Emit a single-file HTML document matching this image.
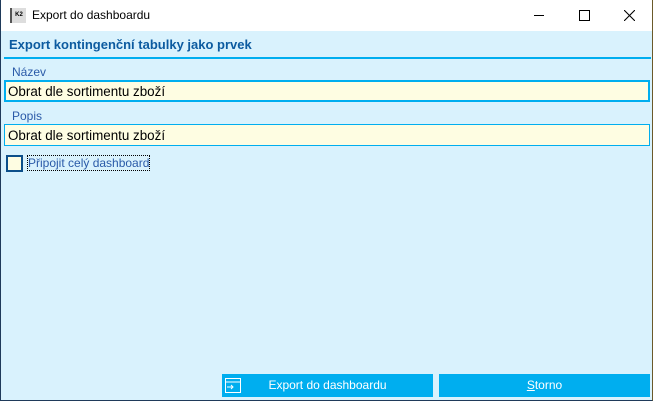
<!DOCTYPE html>
<html><head><meta charset="utf-8"><style>
body{margin:0;width:653px;height:401px;overflow:hidden;font-family:"Segoe UI","Liberation Sans",sans-serif;}
.win{position:absolute;left:0;top:0;background:#d9f2fd;border-right:1px solid #6b5a2a;border-bottom:1px solid #1f3a5a;border-left:1px solid #1f3a5a;box-sizing:border-box;width:653px;height:401px}
.tb{position:absolute;left:0;top:0;width:651px;height:31px;background:#fff}
.t{position:absolute;font-size:12px;white-space:nowrap}
.inp{position:absolute;left:3px;width:646px;height:22px;background:#fefde2;box-sizing:border-box}
.btn{position:absolute;top:374px;height:23px;background:#00aeef;color:#fff;font-size:12px;text-align:center;line-height:23px}
</style></head><body>
<div class="win">
<div class="tb">
<div style="position:absolute;left:9px;top:8px;width:16px;height:15px;background:#ddd;border-left:2px solid #555;font-size:6px;font-weight:bold;line-height:15px;text-align:center;box-sizing:border-box">K2</div>
<div class="t" style="left:31px;top:8px;color:#000">Export do dashboardu</div>
<div style="position:absolute;left:533px;top:15px;width:10px;height:1px;background:#000"></div>
<div style="position:absolute;left:578px;top:10px;width:9px;height:9px;border:1px solid #000"></div>
<svg style="position:absolute;left:623px;top:10px" width="11" height="11"><path d="M0 0L11 11M11 0L0 11" stroke="#000" stroke-width="1.1"/></svg>
</div>
<div class="t" style="left:8px;top:37px;font-weight:bold;color:#0c5ba0;font-size:13px">Export kontingenční tabulky jako prvek</div>
<div style="position:absolute;left:3px;top:57px;width:647px;height:2px;background:#00aeef"></div>
<div class="t" style="left:11px;top:65px;color:#2a5aa8">Název</div>
<div class="inp" style="top:80px;border:2px solid #00aeef"></div>
<div class="t" style="left:7px;top:84px;color:#000;font-size:13.4px">Obrat dle sortimentu zboží</div>
<div class="t" style="left:11px;top:109px;color:#2a5aa8">Popis</div>
<div class="inp" style="top:124px;border:1px solid #00aeef"></div>
<div class="t" style="left:7px;top:128px;color:#000;font-size:13.4px">Obrat dle sortimentu zboží</div>
<div style="position:absolute;left:5px;top:155px;width:17px;height:17px;border:2px solid #0c4f8a;background:#fefde2;box-sizing:border-box"></div>
<div class="t" style="left:27px;top:156px;color:#2a5aa8;outline:1px dotted #000">Připojit celý dashboard</div>
<div class="btn" style="left:221px;width:211px">
<svg style="position:absolute;left:3px;top:4px" width="16" height="15"><rect x="0.5" y="0.5" width="15" height="14" fill="none" stroke="#fff"/><path d="M0 4H16M2 9H8M6 7L8 9L6 11" stroke="#fff" fill="none"/></svg>
Export do dashboardu</div>
<div class="btn" style="left:438px;width:211px"><u>S</u>torno</div>
</div>
</body></html>
